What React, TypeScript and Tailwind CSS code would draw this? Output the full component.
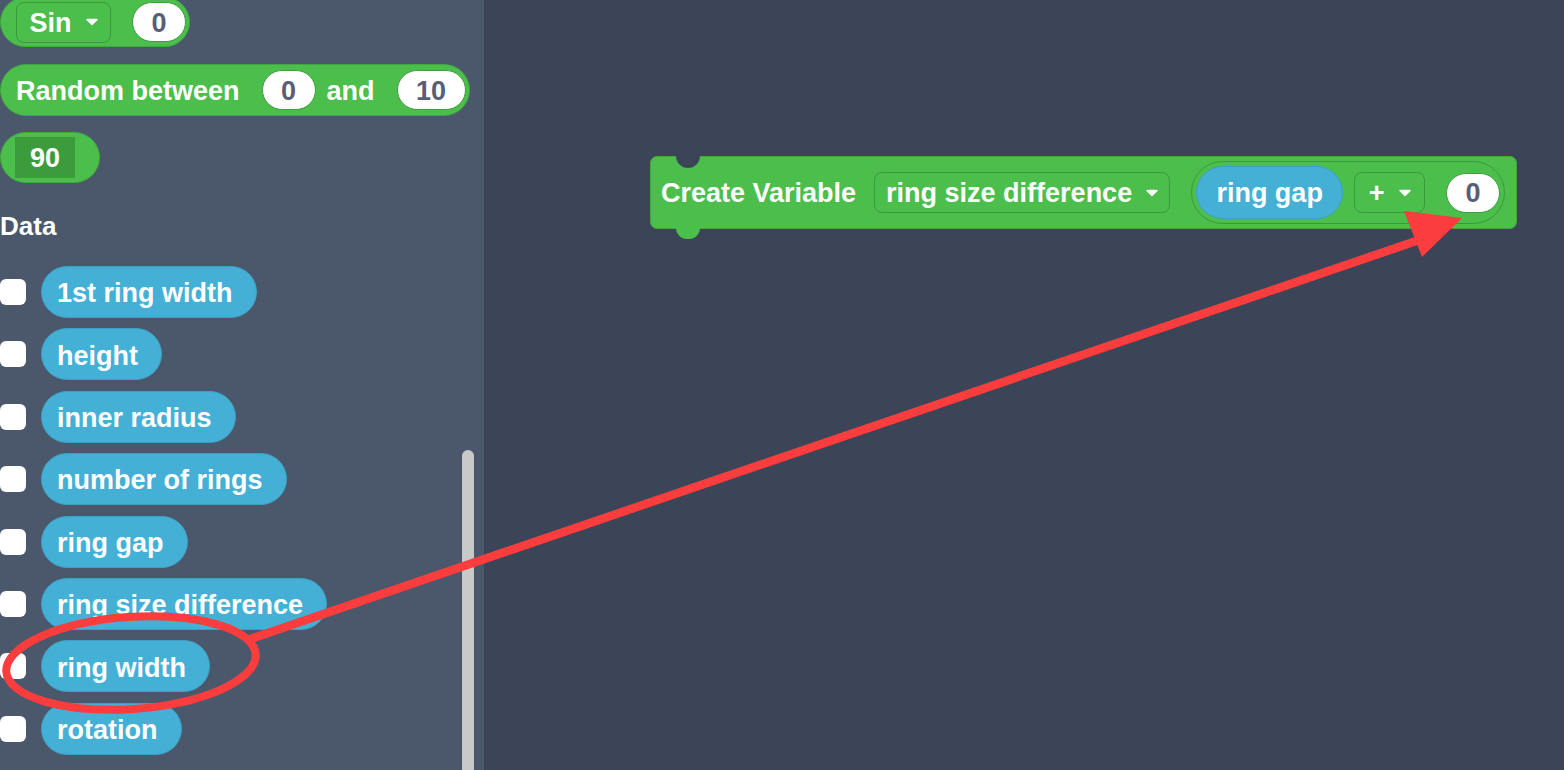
const font = { fontFamily: '"Liberation Sans", Arial, sans-serif' };

const variables = [
  "1st ring width",
  "height",
  "inner radius",
  "number of rings",
  "ring gap",
  "ring size difference",
  "ring width",
  "rotation",
];

function Caret() {
  return (
    <svg width="12" height="8" viewBox="0 0 12 8" className="shrink-0">
      <path d="M1 1.5 L11 1.5 L6 6.5 Z" fill="white" stroke="white" strokeWidth="1.5" strokeLinejoin="round" />
    </svg>
  );
}

function NumberInput({ value, width }: { value: string; width: string }) {
  return (
    <div
      className={`${width} h-[40px] rounded-full bg-white flex items-center justify-center pt-[2px] text-[#575e75] text-[27px] font-bold border border-[#3d9e3d]`}
    >
      {value}
    </div>
  );
}

function Dropdown({ label, width }: { label: string; width: string }) {
  return (
    <div
      className={`${width} h-[41px] rounded-lg border border-[#3a9a3a] flex items-center justify-center gap-[14px] text-white text-[27px] font-bold`}
    >
      <span className="pt-[2px]">{label}</span>
      <Caret />
    </div>
  );
}

function Palette() {
  return (
    <div className="relative w-[484px] shrink-0 h-full bg-[#4b586b] overflow-hidden">
      <div className="flex flex-col items-start -mt-[3px]">
        {/* Sin block */}
        <div className="h-[50px] w-[190px] rounded-full bg-[#4bbe4b] border border-[#3fa83f] flex items-center pl-[15px] gap-[21px]">
          <Dropdown label="Sin" width="w-[95px]" />
          <NumberInput value="0" width="w-[54px]" />
        </div>

        {/* Random between */}
        <div className="mt-[17px] h-[52px] w-[470px] rounded-full bg-[#4bbe4b] border border-[#3fa83f] flex items-center pl-[15px] text-white text-[27px] font-bold">
          <span className="pt-[2px]">Random between</span>
          <div className="ml-[22px]">
            <NumberInput value="0" width="w-[54px]" />
          </div>
          <span className="ml-[11px] pt-[2px]">and</span>
          <div className="ml-[22px]">
            <NumberInput value="10" width="w-[69px]" />
          </div>
        </div>

        {/* 90 */}
        <div className="mt-[16px] h-[51px] w-[100px] rounded-full bg-[#4bbe4b] border border-[#3fa83f] flex items-center pl-[14px]">
          <div className="w-[60px] h-[41px] bg-[#3c9c3c] flex items-center justify-center pt-[2px] text-white text-[27px] font-bold">
            90
          </div>
        </div>

        <div className="mt-[28px] text-white text-[26px] font-bold leading-[30px]">Data</div>

        <div className="mt-[25px] flex flex-col gap-[10.4px]">
          {variables.map((v) => (
            <div key={v} className="flex items-center gap-[15px]">
              <div className="w-[26px] h-[26px] rounded-[6px] bg-white" />
              <div className="h-[52px] rounded-full bg-[#45b0d6] border border-[#3e9fc4] flex items-center pl-[15px] pr-[23px] pt-[3px] text-white text-[27px] font-bold">
                {v}
              </div>
            </div>
          ))}
        </div>
      </div>

      {/* scrollbar */}
      <div className="absolute left-[462px] top-[450px] w-[12px] h-[340px] rounded-full bg-[#c9c9c9]" />
    </div>
  );
}

function Workspace() {
  return (
    <div className="flex-1 h-full bg-[#3b4557] pl-[166px] pt-[156px]">
      <div className="relative w-[867px] h-[73px] rounded-[7px] bg-[#4bbe4b] border border-[#3fa83f] flex items-center pl-[10px] text-white text-[27px] font-bold">
        {/* top notch */}
        <div className="absolute left-[25px] -top-[13px] w-[24px] h-[24px] rounded-full bg-[#3b4557]" />
        {/* bottom bump */}
        <div className="absolute left-[25px] -bottom-[11px] w-[24px] h-[22px] rounded-full bg-[#4bbe4b]" />
        <span className="relative pt-[2px]">Create Variable</span>
        <div className="ml-[18px]">
          <Dropdown label="ring size difference" width="w-[296px]" />
        </div>
        <div className="ml-[21px] h-[63px] w-[314px] rounded-full border border-[#3a9a3a] flex items-center pl-[4px]">
          <div className="h-[53px] w-[147px] rounded-full bg-[#45b0d6] border border-[#3e9fc4] flex items-center justify-center pt-[2px]">
            ring gap
          </div>
          <div className="ml-[11px]">
            <Dropdown label="+" width="w-[71px]" />
          </div>
          <div className="ml-[21px]">
            <NumberInput value="0" width="w-[54px]" />
          </div>
        </div>
      </div>
    </div>
  );
}

export default function App() {
  return (
    <div className="relative w-[1564px] h-[770px] flex overflow-hidden" style={font}>
      <Palette />
      <Workspace />

      {/* annotation overlay */}
      <svg className="absolute inset-0 pointer-events-none" width="1564" height="770">
        <ellipse
          cx="131"
          cy="663"
          rx="125"
          ry="46"
          transform="rotate(-4 131 663)"
          fill="none"
          stroke="#fc3d3d"
          strokeWidth="8"
        />
        <line x1="250" y1="639" x2="1425" y2="238" stroke="#fc3d3d" strokeWidth="8.5" strokeLinecap="round" />
        <polygon points="1404,211 1462,218 1422,257" fill="#fc3d3d" />
      </svg>
    </div>
  );
}
